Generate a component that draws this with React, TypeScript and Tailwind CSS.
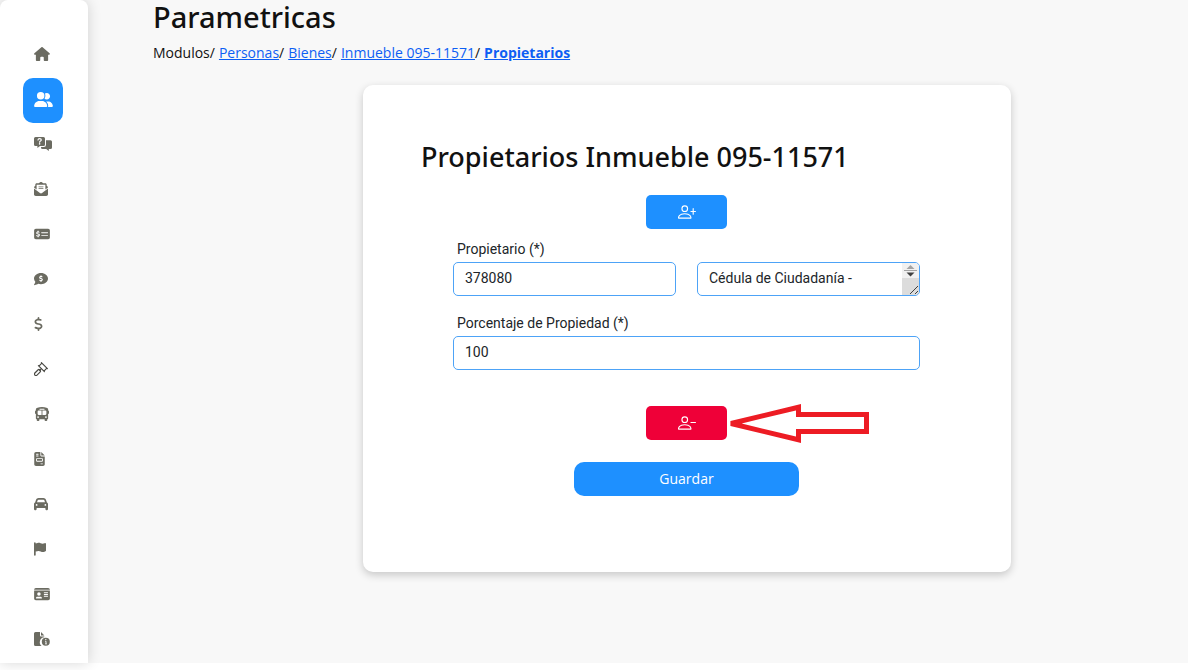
import React, { useState } from "react";
import {
  FaHouse,
  FaUserGroup,
  FaEnvelopeOpenText,
  FaMoneyCheckDollar,
  FaCommentDollar,
  FaDollarSign,
  FaBus,
  FaFileInvoice,
  FaCar,
  FaFlag,
  FaIdCard,
} from "react-icons/fa6";

const QuestionMessagesIcon = () => (
  <svg width="18" height="14" viewBox="0 0 18 14" fill="currentColor" aria-hidden="true">
    <path d="M1.500 0h8A1.500 1.500 0 0 1 11 1.500v6A1.500 1.500 0 0 1 9.500 9H6L3.400 11V9H1.500A1.500 1.500 0 0 1 0 7.500v-6A1.500 1.500 0 0 1 1.500 0z" />
    <path d="M12 3.200h4.500A1.500 1.500 0 0 1 18 4.700v5.800A1.500 1.500 0 0 1 16.500 12h-1.700v2L12.200 12H8.500A1.500 1.500 0 0 1 7 10.500V10h2.800A2.200 2.200 0 0 0 12 7.800z" />
    <path
      d="M4 3c.1-.9.700-1.300 1.600-1.300s1.700.5 1.700 1.300c0 1.100-1.700 1-1.700 2.200"
      fill="none"
      stroke="#fff"
      strokeWidth="1.200"
      strokeLinecap="round"
    />
    <circle cx="5.600" cy="6.900" r=".8" fill="#fff" />
  </svg>
);

const GavelIcon = () => (
  <svg
    width="14"
    height="14"
    viewBox="0 0 14 14"
    fill="none"
    stroke="#4a4a45"
    strokeWidth="1.200"
    strokeLinejoin="round"
    strokeLinecap="round"
    aria-hidden="true"
  >
    <path d="M7.400.6 13.400 6.600M4.400 3.600l6 6M7.900 1.100 4.900 4.100M12.900 6.100 9.900 9.100" />
    <path d="M7.200 6.800 5.600 8.400M3.900 8 .9 11a1.400 1.400 0 0 0 2.100 2.100l3-3a1.450 1.450 0 0 0-2.100-2.100z" />
  </svg>
);

const FileInfoIcon = () => (
  <svg width="16" height="14" viewBox="0 0 16 14" fill="currentColor" aria-hidden="true">
    <path d="M1.500 0H6v3.500a1 1 0 0 0 1 1h3.300v.7A5 5 0 0 0 7.600 14H1.500A1.500 1.500 0 0 1 0 12.500v-11A1.500 1.500 0 0 1 1.500 0z" />
    <path d="M7 0v3.500h3.400z" />
    <circle cx="11.800" cy="9.800" r="4" />
    <path
      d="M11.200 9.300h.8v2.500M11.200 11.900h1.600"
      fill="none"
      stroke="#fff"
      strokeWidth=".9"
    />
    <circle cx="11.800" cy="7.600" r=".7" fill="#fff" />
  </svg>
);

const PERSON_PATH =
  "M6 8a3 3 0 1 0 0-6 3 3 0 0 0 0 6zm2-3a2 2 0 1 1-4 0 2 2 0 0 1 4 0zm4 8c0 1-1 1-1 1H1s-1 0-1-1 1-4 6-4 6 3 6 4zm-1-.004c-.001-.246-.154-.986-.832-1.664C9.516 10.680 8.289 10 6 10c-2.290 0-3.516.680-4.168 1.332-.678.678-.830 1.418-.832 1.664h10z";

const PersonIcon: React.FC<{ sign: "plus" | "minus" }> = ({ sign }) => (
  <svg width="18" height="18" viewBox="0 0 16 16" fill="currentColor" aria-hidden="true">
    <path d={PERSON_PATH} />
    {sign === "plus" ? (
      <path d="M13.500 4.500a.5.500 0 0 1 .5.500V7h1.500a.5.500 0 0 1 0 1H14v2a.5.500 0 0 1-1 0V8h-1.500a.5.500 0 0 1 0-1H13V5a.5.500 0 0 1 .5-.5z" />
    ) : (
      <path d="M11 7.500a.5.500 0 0 1 .5-.5h4a.5.500 0 0 1 0 1h-4a.5.500 0 0 1-.5-.5z" />
    )}
  </svg>
);

const menuItems = [
  { label: "Inicio", icon: <FaHouse className="h-[14px] w-4" /> },
  { label: "Personas", icon: <FaUserGroup className="h-[15px] w-[19px]" />, active: true },
  { label: "Consultas", icon: <QuestionMessagesIcon /> },
  { label: "Correspondencia", icon: <FaEnvelopeOpenText className="h-[14px] w-[14px]" /> },
  { label: "Pagos", icon: <FaMoneyCheckDollar className="h-[14px] w-4" /> },
  { label: "Cobros", icon: <FaCommentDollar className="h-[14px] w-[14px]" /> },
  { label: "Tarifas", icon: <FaDollarSign className="h-[14px] w-[9px]" /> },
  { label: "Procesos", icon: <GavelIcon /> },
  { label: "Transporte", icon: <FaBus className="h-[14px] w-4" /> },
  { label: "Facturas", icon: <FaFileInvoice className="h-[14px] w-[11px]" /> },
  { label: "Vehiculos", icon: <FaCar className="h-[14px] w-[14px]" /> },
  { label: "Reportes", icon: <FaFlag className="h-[14px] w-3" /> },
  { label: "Identificacion", icon: <FaIdCard className="h-[14px] w-4" /> },
  { label: "Informes", icon: <FileInfoIcon /> },
];

const Sidebar = () => (
  <nav className="w-[88px] shrink-0 rounded-t-lg bg-white pt-[33px] shadow-[0_0_14px_rgba(0,0,0,0.16)]">
    {menuItems.map((item) => (
      <a
        key={item.label}
        href="#"
        aria-label={item.label}
        className={
          item.active
            ? "ml-[23px] flex h-[45px] w-10 items-center rounded-[10px] bg-[#1e90ff] pb-[3px] pl-[11px] text-white"
            : "ml-[23px] flex h-[45px] w-10 items-center pb-[3px] pl-[11px] text-[#6b6b61]"
        }
      >
        <span className="shrink-0">{item.icon}</span>
      </a>
    ))}
  </nav>
);

const Breadcrumb = () => (
  <div className="mt-[7px] flex flex-wrap gap-x-1 font-['Open_Sans',sans-serif] text-sm leading-6 text-[#111]">
    <span>Modulos/</span>
    <span>
      <a href="#" className="text-[#0d5ef4] underline">Personas</a>/
    </span>
    <span>
      <a href="#" className="text-[#0d5ef4] underline">Bienes</a>/
    </span>
    <span>
      <a href="#" className="text-[#0d5ef4] underline">Inmueble 095-11571</a>/
    </span>
    <a href="#" className="font-bold text-[#0d5ef4] underline">Propietarios</a>
  </div>
);

const fieldClass =
  "block h-[34px] w-full rounded-[5px] border border-[#4da3f7] bg-white px-[11px] pb-[2px] text-sm text-[#212529] outline-none";

const App: React.FC = () => {
  const [owner, setOwner] = useState("378080");
  const [detail, setDetail] = useState("Cédula de Ciudadanía -");
  const [percent, setPercent] = useState("100");

  return (
    <div className="min-h-screen bg-white pb-2 font-['Noto_Sans',sans-serif]">
      <div className="flex bg-[#f8f8f8]">
        <Sidebar />
        <main className="flex-1 pl-[65px]">
          <h1 className="text-[29px] leading-[34px] font-medium text-[#111]">Parametricas</h1>
          <Breadcrumb />

          <div className="mt-5 flex justify-center pl-[33px]">
            <form
              className="w-full max-w-[648px] rounded-[10px] bg-white pt-[52px] pr-[59px] pb-[76px] pl-[58px] shadow-[0_3px_8px_rgba(0,0,0,0.2)]"
              onSubmit={(e) => e.preventDefault()}
            >
              <h2 className="text-[27px] leading-10 font-medium text-[#111]">
                Propietarios Inmueble 095-11571
              </h2>

              <div className="mt-[18px] px-8">
                <button
                  type="button"
                  aria-label="Agregar propietario"
                  className="mx-auto flex h-[34px] w-[81px] items-center justify-center rounded-[5px] bg-[#1e90ff] text-white"
                >
                  <PersonIcon sign="plus" />
                </button>

                <div className="mt-[10px] font-[Roboto,sans-serif]">
                  <label htmlFor="owner" className="ml-1 block text-sm leading-5 text-[#212529]">
                    Propietario (*)
                  </label>
                  <div className="mt-[3px] grid grid-cols-2 gap-[21px]">
                    <input
                      id="owner"
                      className={fieldClass}
                      value={owner}
                      onChange={(e) => setOwner(e.target.value)}
                    />
                    <div className="relative">
                      <textarea
                        aria-label="Detalle del propietario"
                        rows={1}
                        className="block h-[34px] w-full resize-none overflow-hidden rounded-[5px] border border-[#4da3f7] bg-white px-[11px] py-[5px] text-sm text-[#212529] outline-none"
                        value={detail}
                        onChange={(e) => setDetail(e.target.value)}
                      />
                      {/* Scroll arrows and resize grip */}
                      <svg
                        width="17"
                        height="32"
                        viewBox="0 0 17 32"
                        className="pointer-events-none absolute top-px right-px rounded-r"
                        aria-hidden="true"
                      >
                        <path d="M0 0h17v15H0z" fill="#f1f1f1" />
                        <path d="M0 15h17v17H0z" fill="#dcdcdc" />
                        <path d="M2 7.500h13" stroke="#a3a3a3" />
                        <path d="M8.500 2 12.500 6h-8z" fill="#a3a3a3" />
                        <path d="M8.500 13.500 12.500 9.500h-8z" fill="#404040" />
                        <path d="M8 31l8-8M13 31l3-3" stroke="#404040" />
                      </svg>
                    </div>
                  </div>

                  <label
                    htmlFor="percent"
                    className="mt-[17px] ml-1 block text-sm leading-5 text-[#212529]"
                  >
                    Porcentaje de Propiedad (*)
                  </label>
                  <div className="mt-[3px]">
                    <input
                      id="percent"
                      className={fieldClass}
                      value={percent}
                      onChange={(e) => setPercent(e.target.value)}
                    />
                  </div>
                </div>

                <div className="relative mx-auto mt-9 w-[81px]">
                  <button
                    type="button"
                    aria-label="Quitar propietario"
                    className="flex h-[34px] w-full items-center justify-center rounded-[5px] bg-[#ef0038] text-white"
                  >
                    <PersonIcon sign="minus" />
                  </button>
                  {/* Arrow pointing at the remove button */}
                  <svg
                    width="143"
                    height="40"
                    viewBox="0 0 143 40"
                    fill="none"
                    stroke="#ed1c24"
                    strokeWidth="5"
                    className="pointer-events-none absolute top-[-3px] left-full"
                    aria-hidden="true"
                  >
                    <path
                      d="M4 20.500 71.500 4.200V11.500H139.500V28.500H71.500V36.800z"
                      strokeLinejoin="miter"
                      strokeMiterlimit="2"
                    />
                  </svg>
                </div>

                <button
                  type="submit"
                  className="mx-auto mt-[22px] block h-[34px] w-[225px] rounded-[10px] bg-[#1e90ff] font-['Open_Sans',sans-serif] text-sm text-white"
                >
                  Guardar
                </button>
              </div>
            </form>
          </div>
        </main>
      </div>
    </div>
  );
};

export default App;
